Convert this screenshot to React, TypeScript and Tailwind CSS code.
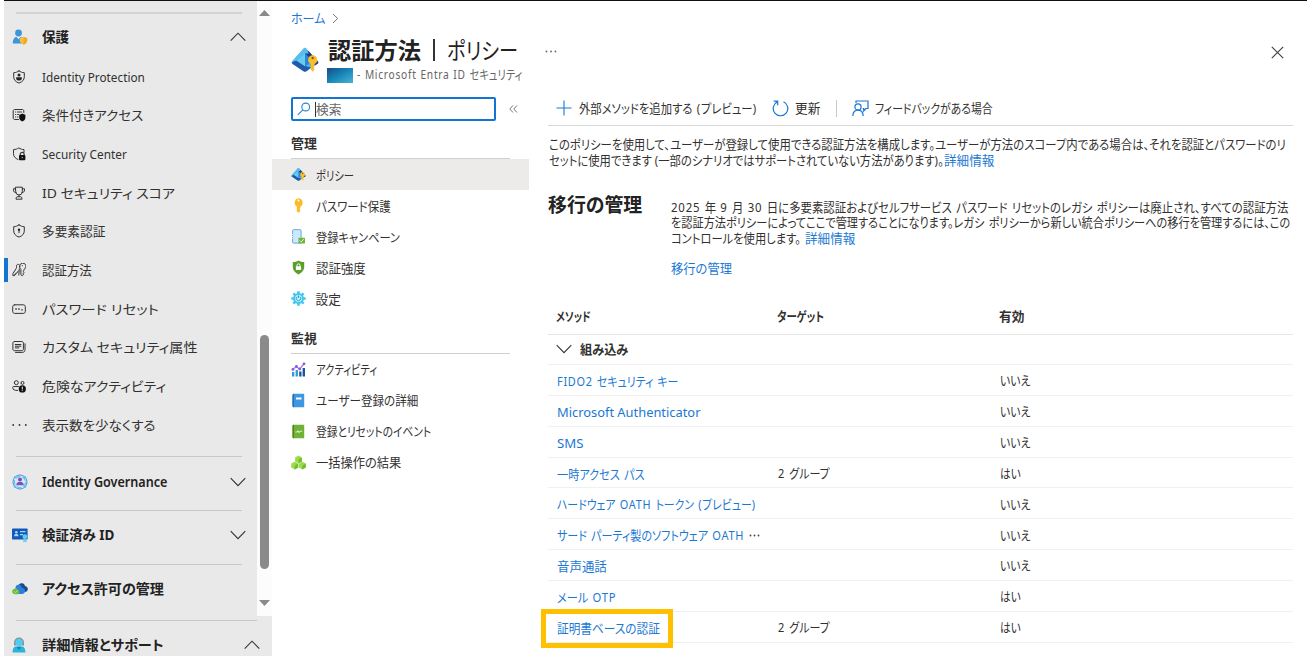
import { useLayoutEffect, useRef, useState } from 'react';
import type { ReactNode } from 'react';

/* Condenses or widens a single line of text so that it fills the given width. */
function Fit({ w, c = '', children, wide = true }: { w: number; c?: string; children: string; wide?: boolean }) {
  const ref = useRef<HTMLSpanElement>(null);
  const [scale, setScale] = useState(1);
  useLayoutEffect(() => {
    if (ref.current) setScale(w / ref.current.offsetWidth);
  }, [w]);
  const mixed = wide && /[^\x00-\x7f]/.test(children);
  /* Latin runs inside Japanese text are set a little looser. */
  const body: ReactNode = mixed
    ? children.split(/([\x21-\x7e]+)/).map((part, i) =>
        i % 2 ? <span key={i} className="tracking-[0.07em]">{part}</span> : part,
      )
    : children;
  return (
    <span className={`block shrink-0 whitespace-nowrap ${c}`} style={{ width: w }}>
      <span ref={ref} className={`inline-block origin-left ${mixed ? '[word-spacing:1.500px]' : ''}`} style={{ transform: `scaleX(${scale})` }}>
        {body}
      </span>
    </span>
  );
}

function Chevron({ up = false, c = '' }: { up?: boolean; c?: string }) {
  return (
    <svg className={`shrink-0 ${c}`} width="16" height="10" viewBox="0 0 16 10" fill="none" stroke="#333" strokeWidth="1.1">
      <path d={up ? 'M.7 8.6 8 1.2l7.3 7.4' : 'M.7 1.2 8 8.6l7.3-7.4'} />
    </svg>
  );
}

function Line({ d, children }: { d?: string; children?: ReactNode }) {
  return (
    <svg width="14" height="14" viewBox="0 0 14 14" fill="none" stroke="#333" strokeWidth="1" strokeLinejoin="round" strokeLinecap="round">
      {d && <path d={d} />}
      {children}
    </svg>
  );
}

const SHIELD = 'M7 .9C8.6 2 10.2 2.6 12.3 2.7v4.2c0 3-2 5-5.3 6.2C3.700 11.900 1.700 9.900 1.700 6.900V2.700C3.800 2.600 5.400 2 7 .9Z';

const navIcons = {
  identity: (
    <Line d={SHIELD}>
      <circle cx="7" cy="4.900" r="1.500" fill="#222" stroke="none" />
      <path d="M4.200 7.200h5.600v1.400C9.800 10 8.600 10.600 7 10.600S4.200 10 4.200 8.600Z" fill="#222" stroke="none" />
    </Line>
  ),
  conditional: (
    <Line d="M6.500 11.500H2.700c-.9 0-1.500-.6-1.500-1.500V3c0-.9.600-1.500 1.500-1.500h7.600c.9 0 1.500.6 1.500 1.500v1.500M3.500 4h.3M5.500 4h4M3.500 6.500h.3M5.500 6.500h1M3.500 9h.3M5.500 9h.5">
      <path d="M10.300 5.600c.9.700 1.900 1 3.100 1.100v2.700c0 1.900-1.200 3.200-3.100 4-1.900-.8-3.100-2.100-3.100-4V6.700c1.200-.1 2.200-.4 3.100-1.100Z" fill="#111" stroke="none" />
    </Line>
  ),
  center: (
    <Line d="M6 12.500C3.200 11.300 1.500 9.500 1.500 6.700V2.600C3.500 2.500 5.200 2 6.800.9 8.500 2 10 2.500 12 2.600v2.600">
      <path d="M8.300 8.300V7.200a1.900 1.900 0 0 1 3.800 0v1.100" strokeWidth="1.200" />
      <rect x="7" y="8" width="6.400" height="5.300" rx="1" fill="#111" stroke="none" />
      <circle cx="10.200" cy="10.600" r=".6" fill="#eee" stroke="none" />
    </Line>
  ),
  score: <Line d="M3.700 1.200h6.600v4.500a3.300 3.300 0 0 1-6.600 0ZM3.700 2.800H1.500v1.400c0 1.500 1 2.300 2.300 2.300M10.300 2.800h2.200v1.400c0 1.500-1 2.300-2.300 2.300M7 9v1.700M4 12.800c0-1.400.6-2.100 1.800-2.100h2.400c1.200 0 1.800.7 1.800 2.100Z" />,
  mfa: (
    <Line d={SHIELD}>
      <circle cx="7" cy="5.800" r="1.200" fill="#222" stroke="none" />
      <path d="M7 6v2.800" />
    </Line>
  ),
  methods: <Line d="M7.600 3.400A3.200 3.200 0 1 1 12 6.300v1.200l-.9.900.9.900-.9 1 .7.800-1.700 1.700-1.200-1.100V6.500A3.400 3.400 0 0 1 7.600 3.400ZM10.300 2.700h.1M7.200 1.800C5.600.5 4.200 1.800 4.500 3.700c.1.700 0 1.300-.3 1.800L.9 10.600v2h1.700v-1.200h1.200v-1.300h1L6.300 8M7.300 6l-.5 6" />,
  reset: <Line d="M2.700 2.800h8.600c1.200 0 2 .8 2 2v4.600c0 1.200-.8 2-2 2H2.700c-1.200 0-2-.8-2-2V4.800c0-1.200.8-2 2-2Z"><path d="M3.300 7h1.500M6.200 7h1.500M9.300 7.900h1.500" strokeWidth="1.400" strokeLinecap="butt" /></Line>,
  custom: <Line d="M2.500 1.500h7.300c1 0 1.600.6 1.600 1.600v6c0 1-.6 1.600-1.600 1.600H2.500C1.500 10.700.9 10.100.9 9.100v-6c0-1 .6-1.600 1.600-1.600ZM3.300 4.500h5.600M3.300 6.200h5.600M3.300 7.900h3.500M13 3.700v6c0 1.700-1 2.700-2.700 2.700H3.500" />,
  risky: (
    <Line d="M2.300 3.700a2 2 0 1 0 4 0a2 2 0 1 0-4 0M9 3.900a1.500 1.500 0 1 0 3 0a1.500 1.500 0 1 0-3 0M6.500 7.500H1.700c-1 0-1 .6-1 1.200C.7 10.500 2.300 11.500 5.500 11.500">
      <circle cx="10.300" cy="9.900" r="3.600" fill="#111" stroke="none" />
      <path d="M10.300 8v2.100M10.300 11.600v.1" stroke="#eee" />
    </Line>
  ),
  more: <svg width="15" height="14" viewBox="0 0 15 14" fill="#333"><circle cx="1.200" cy="7" r=".9" /><circle cx="7.500" cy="7" r=".9" /><circle cx="13.800" cy="7" r=".9" /></svg>,
};

const nav: { icon: keyof typeof navIcons; label: string; w: number; active?: boolean }[] = [
  { icon: 'identity', label: 'Identity Protection', w: 103 },
  { icon: 'conditional', label: '条件付きアクセス', w: 101 },
  { icon: 'center', label: 'Security Center', w: 85 },
  { icon: 'score', label: 'ID セキュリティ スコア', w: 133 },
  { icon: 'mfa', label: '多要素認証', w: 63 },
  { icon: 'methods', label: '認証方法', w: 50, active: true },
  { icon: 'reset', label: 'パスワード リセット', w: 117 },
  { icon: 'custom', label: 'カスタム セキュリティ属性', w: 155 },
  { icon: 'risky', label: '危険なアクティビティ', w: 124 },
  { icon: 'more', label: '表示数を少なくする', w: 113 },
];

function Section({ icon, label, w, c, chevron, weight = 'font-bold' }: { icon: ReactNode; label: string; w: number; c: string; chevron?: 'up' | 'down'; weight?: string }) {
  return (
    <div className={`flex shrink-0 items-center ${c}`}>
      <span className="flex w-[38px] shrink-0 items-center pl-[8px]">{icon}</span>
      <Fit w={w} wide={false} c={`text-[13.500px] text-[#222] ${weight}`}>{label}</Fit>
      {chevron && <Chevron up={chevron === 'up'} c="ml-auto" />}
    </div>
  );
}

const userShield = (
  <svg width="16" height="16" viewBox="0 0 16 16">
    <circle cx="6.500" cy="4" r="3.400" fill="#3b97dd" />
    <path d="M.8 14.500C.8 10.500 2.300 8 4.500 8l2 2.200L8.500 8c2 0 3.500 2.500 3.700 6.500Z" fill="#3b97dd" />
    <path d="M11.500 7.800c1 .8 2 1.100 3.700 1.200v2.600c0 2-1.500 3.300-3.700 4.200-2.200-.9-3.700-2.200-3.700-4.200V9c1.700-.1 2.700-.4 3.700-1.200Z" fill="#f9c13a" />
    <path d="M11.500 7.800c1 .8 2 1.100 3.700 1.200v2.600c0 2-1.500 3.300-3.700 4.200Z" fill="#f0a92b" />
  </svg>
);
const governance = (
  <svg width="16" height="16" viewBox="0 0 16 16" fill="none">
    <circle cx="8" cy="8" r="7" stroke="#4a8ee0" strokeWidth="1" />
    <circle cx="8" cy="8" r="5.600" fill="#d9e8f7" stroke="#5ec5e8" strokeWidth="1.200" strokeDasharray="5 2" />
    <circle cx="8" cy="5.500" r="2" fill="#7a4ecb" />
    <path d="M4.200 11.300C4.600 8.500 5.800 7.700 8 7.700s3.400.8 3.800 3.600Z" fill="#7a4ecb" />
    <circle cx="2.800" cy="3.300" r="1.100" fill="#4cc3ec" /><circle cx="13.200" cy="3.300" r="1.100" fill="#4cc3ec" />
    <circle cx="2.800" cy="12.700" r="1.100" fill="#4cc3ec" /><circle cx="13.200" cy="12.700" r="1.100" fill="#4cc3ec" />
  </svg>
);
const verified = (
  <svg width="16" height="16" viewBox="0 0 16 16">
    <rect x="0" y="1.500" width="15.600" height="11" rx=".7" fill="#1459b8" />
    <circle cx="4.300" cy="5.200" r="1.300" fill="#9ddcff" />
    <path d="M2 9.200c.2-1.700.9-2.300 2.300-2.300s2.100.6 2.300 2.300ZM8 4h5.500v1.300H8ZM8 7h3v1.200H8Z" fill="#9ddcff" />
    <circle cx="12.900" cy="9.700" r="2.400" fill="#60ccef" />
    <path d="m11.600 11.500-.4 4 1.700-1 1.700 1-.4-4Z" fill="#60ccef" />
  </svg>
);
const cloud = (
  <svg width="16" height="13" viewBox="0 0 16 13">
    <path d="M6 8C5 3.500 7.500 1 10 1.200c2 .1 2.700 1.500 3 2.700 1.700.3 2.800 1.600 2.800 3.200 0 1.700-1.300 3-3 3H7Z" fill="#1c4b8c" />
    <path d="M3.500 7C3 4 5 2.500 7 2.800c1.700.2 2.700 1.400 2.900 3 2 .2 3.200 1.600 3.200 3.100 0 1.800-1.400 3-3.100 3H4Z" fill="#2b7fdf" />
    <path d="M3.300 12.200C1.400 12.200.2 11 .2 9.500c0-1.400 1-2.500 2.400-2.700C3.300 5.900 5.700 6 6 8.200c1 .3 1.400 1.100 1.400 2 0 1.200-.8 2-2 2Z" fill="#6fbe3a" />
    <path d="m2.300 9.500 1.200 1.200L5.700 8.300" fill="none" stroke="#c8eab0" strokeWidth=".8" />
  </svg>
);
const support = (
  <svg width="14" height="18" viewBox="0 0 14 18">
    <path d="M2 6.500a5 5 0 0 1 10 0v3H9.500V5h-5v4.500H2Z" fill="#8b9095" />
    <circle cx="7" cy="6.400" r="3.700" fill="#50cdf0" />
    <path d="M.6 16.500C.6 12.300 2 10.500 4.300 10.500L7 12.800l2.700-2.300c2.300 0 3.700 1.800 3.700 6Z" fill="#28b4dc" />
    <path d="M4.300 10.500 7 14l2.700-3.500Z" fill="#0c88ad" />
  </svg>
);

function Diamond({ s }: { s: number }) {
  return (
    <svg width={s} height={s} viewBox="0 0 28 28" className="shrink-0">
      <path d="M15.200 2.500c-.8-.9-1.800-.9-2.600 0L1.200 15.200c-.9 1-.8 1.900.2 2.600l11.100 7.500c.9.600 2 .6 2.900 0l11.100-7.500c1-.7 1.100-1.600.2-2.600Z" fill="#4cb4ea" />
      <path d="M14 7.500 17.500 5l9.200 10.200c.9 1 .8 1.900-.2 2.600l-3 2L14 9Z" fill="#1a3f7c" />
      <path d="m.9 16.800 4-2.700L14 20l6 1.500-4.600 3.800c-.9.600-2 .6-2.900 0L1.400 17.800Z" fill="#215aa8" />
      <path d="M14 7.500v12.700l-8.400-5.500Z" fill="#67cbf3" />
      <path d="m14 7.500 8.400 7.200-8.400 5.500Z" fill="#2c86d8" />
      <path d="M12.600 2.500 1.200 15.200l4.400-.5L14 7.500h3.800l-2.600-5c-.8-.9-1.800-.9-2.600 0Z" fill="#5abdf0" />
      <path d="M21.700 9.300a4.600 4.600 0 0 1 2 8.700v1.500l-1 1 1 1-1 1 .9 1-2 2.200-1.900-2.200V18a4.600 4.600 0 0 1 2-8.700Z" fill="#fcbc2c" />
      <circle cx="21.700" cy="12" r="1.200" fill="#7d5a20" />
    </svg>
  );
}

const menuIcons = {
  policy: <Diamond s={15} />,
  key: <svg width="15" height="15" viewBox="0 0 15 15"><path d="M7.500.3a4.500 4.500 0 0 1 2 8.300v1.200l-.9.900.9.900-.9.900.8.800-1.900 1.500-1.700-1.500V8.600A4.500 4.500 0 0 1 7.500.3Z" fill="#fdbb27" /><circle cx="7.500" cy="2.600" r="1" fill="#fff" /></svg>,
  campaign: <svg width="15" height="15" viewBox="0 0 15 15"><rect x="1.600" y=".7" width="8.500" height="13.400" rx="1" fill="#cfe9fc" stroke="#65a8e8" /><path d="M1.600 5v5" stroke="#cfe9fc" strokeDasharray="1 1" /><rect x="7.500" y="8.800" width="6.500" height="5.700" rx=".6" fill="#70b83a" /><path d="m9 11.500 1.300 1.300 2.300-2.500" fill="none" stroke="#fff" /></svg>,
  strength: <svg width="15" height="15" viewBox="0 0 15 15"><path d="M7.500.4c1.700 1.300 3.500 1.700 5.700 1.700v4.700c0 3.700-2.500 6-5.700 7.700C4.300 12.800 1.800 10.500 1.800 6.800V2.100C4 2.100 5.800 1.700 7.500.4Z" fill="#5b9f29" /><path d="M6 6.500V5.300a1.500 1.500 0 0 1 3 0v1.200" fill="none" stroke="#fff" /><rect x="4.900" y="6.200" width="5.200" height="3.900" rx=".5" fill="#fff" /></svg>,
  settings: (
    <svg width="15" height="15" viewBox="0 0 15 15" fill="none">
      <path d="M7.500.3v14.400M.3 7.500h14.400M2.400 2.400l10.200 10.200M12.600 2.400 2.400 12.600" stroke="#42c6ee" strokeWidth="2.600" />
      <circle cx="7.500" cy="7.500" r="5.400" fill="#42c6ee" />
      <circle cx="7.500" cy="7.500" r="3.400" fill="#c9f0fb" />
      <path d="M6.200 5.700a2.200 2.200 0 1 0 2.600 0M7.500 4.500V7" stroke="#2a9fdb" strokeWidth="1" />
    </svg>
  ),
  activity: <svg width="15" height="15" viewBox="0 0 15 15"><path d="M1 10h2.300v4.500H1ZM4.600 8h2.300v6.500H4.600Z" fill="#2a9cdb" /><path d="M8.200 9.500h2.300v5H8.200ZM11.600 6H14v8.500h-2.400Z" fill="#1d5397" /><path d="m1.800 7.500 3.500-3 3.200 2.700L12.900 2" fill="none" stroke="#a578e6" strokeWidth="1.200" /><g fill="#8a55e0"><circle cx="1.900" cy="7.400" r="1.400" /><circle cx="5.400" cy="4.500" r="1.400" /><circle cx="8.700" cy="7" r="1.400" /><circle cx="13" cy="1.800" r="1.400" /></g></svg>,
  book: <svg width="15" height="15" viewBox="0 0 15 15"><path d="M1.500 2.200c0-1 .5-1.500 1.500-1.500h10.200v13.600H3c-1 0-1.500-.5-1.500-1.500Z" fill="#3f97e2" /><path d="M1.500 2.200c0-1 .5-1.500 1.500-1.500v13.600c-1 0-1.500-.5-1.500-1.500Z" fill="#1f6fbd" /><rect x="5" y="4.500" width="5.500" height="2" rx=".3" fill="#fff" /></svg>,
  log: <svg width="15" height="15" viewBox="0 0 15 15"><path d="M1.500 2.200c0-1 .5-1.500 1.500-1.500h10.200v13.600H3c-1 0-1.500-.5-1.500-1.500Z" fill="#71b137" /><path d="M1.500 2.200c0-1 .5-1.500 1.500-1.500v13.600c-1 0-1.500-.5-1.500-1.500Z" fill="#4c8522" /><path d="M4.500 8h1.700l.8-1.300 1 2.100.9-1.600h2.300" fill="none" stroke="#e9f7dc" strokeWidth=".9" /></svg>,
  bulk: (
    <svg width="15" height="15" viewBox="0 0 15 15">
      <g fill="#9ddc48"><path d="m7.500.6 3.400 1.800v4L7.500 8.200 4.100 6.400v-4Z" /><path d="m3.700 6.800 3.500 1.800v4l-3.500 1.900-3.500-1.900v-4Z" /><path d="m11.300 6.800 3.500 1.800v4l-3.500 1.900-3.500-1.900v-4Z" /></g>
      <g fill="#74ba33"><path d="M10.900 2.400 7.500 4.300v3.900l3.400-1.800Z" /><path d="m7.200 8.600-3.500 1.900v4l3.500-1.900Z" /><path d="m14.800 8.600-3.500 1.900v4l3.500-1.900Z" /></g>
    </svg>
  ),
};

type MenuEntry = { icon: keyof typeof menuIcons; label: string; w: number; active?: boolean };
const manage: MenuEntry[] = [
  { icon: 'policy', label: 'ポリシー', w: 38, active: true },
  { icon: 'key', label: 'パスワード保護', w: 75 },
  { icon: 'campaign', label: '登録キャンペーン', w: 84 },
  { icon: 'strength', label: '認証強度', w: 50 },
  { icon: 'settings', label: '設定', w: 25 },
];
const monitor: MenuEntry[] = [
  { icon: 'activity', label: 'アクティビティ', w: 61 },
  { icon: 'book', label: 'ユーザー登録の詳細', w: 102 },
  { icon: 'log', label: '登録とリセットのイベント', w: 115 },
  { icon: 'bulk', label: '一括操作の結果', w: 85 },
];

function Menu({ items }: { items: MenuEntry[] }) {
  return (
    <>
      {items.map((m) => (
        <div key={m.label} className={`flex h-[31px] items-center pl-[19px] ${m.active ? 'bg-[#edebe9]' : ''}`}>
          <span className="w-[24.500px]">{menuIcons[m.icon]}</span>
          <Fit w={m.w}>{m.label}</Fit>
        </div>
      ))}
    </>
  );
}

const methods: { name: string; w: number; target?: string; on: boolean; more?: boolean; marked?: boolean }[] = [
  { name: 'FIDO2 セキュリティ キー', w: 121, on: false },
  { name: 'Microsoft Authenticator', w: 143, on: false },
  { name: 'SMS', w: 26, on: false },
  { name: '一時アクセス パス', w: 88, target: '2 グループ', on: true },
  { name: 'ハードウェア OATH トークン (プレビュー)', w: 199, on: false },
  { name: 'サード パーティ製のソフトウェア OATH', w: 187, on: false, more: true },
  { name: '音声通話', w: 50, on: false },
  { name: 'メール OTP', w: 59, on: true },
  { name: '証明書ベースの認証', w: 103, target: '2 グループ', on: true, marked: true },
];

export default function App() {
  return (
    <div
      lang="ja"
      className="flex h-[656px] w-[1307px] overflow-hidden bg-white pl-[4px] font-['Noto_Sans','Noto_Sans_CJK_JP',sans-serif] text-[12.700px] leading-[16px] text-[#323130] [font-feature-settings:'palt']"
    >
      <aside className="flex w-[268px] shrink-0 flex-col border-t border-[#111] bg-[#e9e9e9]">
        <div className="flex h-[615px] shrink-0">
          <nav className="w-[253px] pt-[11px]">
            <div className="ml-[12px] h-[2px] w-[226px] bg-[#d3d3d3]" />
            <Section icon={userShield} label="保護" w={27} c="h-[45px] w-[242px]" chevron="up" />
            <div className="mt-[-1.700px]">
              {nav.map((n) => (
                <div key={n.label} className="flex h-[38.700px] items-center">
                  <span className={`h-[24px] w-[4px] ${n.active ? 'bg-[#1474d4]' : ''}`} />
                  <span className="w-[34px] pl-[4px]">{navIcons[n.icon]}</span>
                  <Fit w={n.w} wide={false}>{n.label}</Fit>
                </div>
              ))}
            </div>
            <div className="ml-[12px] mt-[11.500px] h-px w-[226px] bg-[#c8c8c8]" />
            <Section icon={governance} label="Identity Governance" w={125} c="h-[53px] w-[242px] pb-[3px]" chevron="down" weight="font-semibold" />
            <div className="ml-[12px] h-px w-[226px] bg-[#c8c8c8]" />
            <Section icon={verified} label="検証済み ID" w={72} c="h-[53px] w-[242px] pb-[5px]" chevron="down" />
            <div className="ml-[12px] h-px w-[226px] bg-[#c8c8c8]" />
            <Section icon={cloud} label="アクセス許可の管理" w={122} c="h-[48px] w-[242px]" />
          </nav>
          <div className="flex w-[15px] flex-col items-center bg-[#fcfcfc] pt-[9px]">
            <svg width="11" height="6" viewBox="0 0 11 6"><path d="M5.500 0 11 6H0Z" fill="#8a8a8a" /></svg>
            <div className="mt-[319px] h-[234px] w-[9px] rounded-full bg-[#8a8a8a]" />
            <svg className="mt-[31px]" width="11" height="6" viewBox="0 0 11 6"><path d="M0 0h11L5.500 6Z" fill="#8a8a8a" /></svg>
          </div>
        </div>
        <div className="ml-[12px] mt-[4px] h-px w-[241px] shrink-0 bg-[#c8c8c8]" />
        <Section icon={support} label="詳細情報とサポート" w={122} c="h-[48px] w-[256px]" chevron="up" />
      </aside>

      <main className="flex min-w-0 flex-1 flex-col border-t border-[#111]">
        <header className="h-[92px] pl-[19px]">
          <div className="flex h-[34px] items-center gap-[7px]">
            <Fit w={34} c="text-[#1a78d2]">ホーム</Fit>
            <svg width="7" height="11" viewBox="0 0 7 11" fill="none" stroke="#777"><path d="m1 1 4.700 4.500L1 10" /></svg>
          </div>
          <div className="flex">
            <div className="w-[36px] pt-[11px]"><Diamond s={28} /></div>
            <div>
              <div className="flex h-[30px] items-center text-[23px] leading-[30px] text-[#222]">
                <Fit w={93} c="ml-[1px] font-bold">認証方法</Fit>
                <span className="ml-[12px] h-[22px] w-[1.500px] bg-[#333]" />
                <Fit w={71} c="ml-[12px]">ポリシー</Fit>
                <svg className="ml-[27px] mt-[3px]" width="12" height="3" fill="#666"><circle cx="1.500" cy="1.500" r=".9" /><circle cx="6" cy="1.500" r=".9" /><circle cx="10.500" cy="1.500" r=".9" /></svg>
              </div>
              <div className="flex h-[18px] items-center">
                <span className="mt-[2px] h-[15px] w-[26px] bg-linear-to-br from-[#164d83] via-[#1787b9] to-[#48b4d3]" />
                <Fit w={165} c="ml-[4px] text-[#666]">- Microsoft Entra ID セキュリティ</Fit>
              </div>
            </div>
            <svg className="ml-auto mr-[23px] mt-[11px]" width="13" height="13" viewBox="0 0 13 13" stroke="#444" strokeWidth="1.200"><path d="m.8.8 11.400 11.400M12.200.8.8 12.200" /></svg>
          </div>
        </header>

        <div className="flex flex-1">
          <section className="w-[257px] shrink-0 pt-[4px]">
            <div className="flex h-[24px] items-center pl-[19px]">
              <div className="flex h-[24px] w-[205px] items-center rounded-[2px] border-2 border-[#1474d4] pl-[4px]">
                <svg width="14" height="14" viewBox="0 0 14 14" fill="none" stroke="#2b82d4" strokeWidth="1.100"><circle cx="8.700" cy="5" r="3.900" /><path d="M5.900 7.800.8 12.900" /></svg>
                <span className="ml-[4px] h-[15px] w-px bg-[#333]" />
                <Fit w={25} c="mt-[-1px] text-[#666]">検索</Fit>
              </div>
              <svg className="ml-[13px]" width="9" height="8" viewBox="0 0 9 8" fill="none" stroke="#777"><path d="M4 .5.800 4 4 7.500M8 .5 4.800 4 8 7.500" /></svg>
            </div>
            <div className="flex h-[37.400px] items-center pl-[19px] pt-[7px]"><Fit w={25.500} c="font-bold">管理</Fit></div>
            <div className="ml-[19px] h-px w-[219px] bg-[#d0d0d0]" />
            <Menu items={manage} />
            <div className="flex h-[38.600px] items-center pl-[19px] pt-[8.500px]"><Fit w={25.500} c="font-bold">監視</Fit></div>
            <div className="ml-[19px] h-px w-[219px] bg-[#d0d0d0]" />
            <Menu items={monitor} />
          </section>

          <section className="ml-[19px] w-[745px]">
            <div className="flex h-[33px] items-center border-b border-[#d8d8d8] pb-[2px] pl-[8px]">
              <svg width="16" height="16" viewBox="0 0 16 16" stroke="#1a78d2" strokeWidth="1.100"><path d="M8 .5v15M.5 8h15" /></svg>
              <Fit w={178} c="ml-[7px]">外部メソッドを追加する (プレビュー)</Fit>
              <svg className="ml-[15px]" width="17" height="17" viewBox="0 0 17 17" fill="none" stroke="#1a78d2" strokeWidth="1.200"><path d="M11.500 1.800a7.300 7.300 0 1 1-6.200.1M1.700 1.200h4v4" /></svg>
              <Fit w={25} c="ml-[6px]">更新</Fit>
              <span className="ml-[16px] h-[17px] w-px bg-[#c8c8c8]" />
              <svg className="ml-[15px]" width="17" height="17" viewBox="0 0 17 17" fill="none" stroke="#1a78d2" strokeWidth="1.200"><path d="M4 3V1h12v7.500h-2l-2.300 2.400V8.500h-1" /><circle cx="6" cy="7" r="3.100" /><path d="M.8 16c.2-3.500 2.200-5.800 5.200-5.800s5 2.300 5.200 5.800" /></svg>
              <Fit w={118} c="ml-[6px]">フィードバックがある場合</Fit>
            </div>
            <div className="pl-[0.500px] pt-[11px] leading-[15.500px]">
              <Fit w={737}>このポリシーを使用して、ユーザーが登録して使用できる認証方法を構成します。ユーザーが方法のスコープ内である場合は、それを認証とパスワードのリ</Fit>
              <div className="flex">
                <Fit w={395} wide={false}>セットに使用できます (一部のシナリオではサポートされていない方法があります)。</Fit>
                <Fit w={50.500} c="text-[#1a78d2]">詳細情報</Fit>
              </div>
            </div>
            <div className="flex pt-[31.500px]">
              <Fit w={94} c="mr-[29px] mt-[-7px] text-[19.500px] font-bold leading-[24px] text-[#222]">移行の管理</Fit>
              <div className="leading-[15.500px]">
                <Fit w={617}>2025 年 9 月 30 日に多要素認証およびセルフサービス パスワード リセットのレガシ ポリシーは廃止され、すべての認証方法</Fit>
                <Fit w={619}>を認証方法ポリシーによってここで管理することになります。レガシ ポリシーから新しい統合ポリシーへの移行を管理するには、この</Fit>
                <div className="flex">
                  <Fit w={130} c="mr-[4px]">コントロールを使用します。</Fit>
                  <Fit w={50.500} c="text-[#1a78d2]">詳細情報</Fit>
                </div>
                <Fit w={61} c="mt-[15px] text-[#1a78d2]">移行の管理</Fit>
              </div>
            </div>
            <div className="mt-[21.400px]">
              <div className="grid h-[37px] grid-cols-[221px_222px_1fr] items-center border-b border-[#e6e6e6] pl-[8px] font-bold">
                <Fit w={35}>メソッド</Fit>
                <Fit w={47}>ターゲット</Fit>
                <Fit w={25}>有効</Fit>
              </div>
              <div className="flex h-[30px] items-center border-b border-[#f0f0f0] pl-[8px] font-bold">
                <Chevron />
                <Fit w={48} c="ml-[8px]">組み込み</Fit>
              </div>
              {methods.map((m) => (
                <div key={m.name} className="relative grid h-[30.900px] grid-cols-[221px_221.500px_1fr] items-center border-b border-[#f0f0f0] pl-[9px] pt-[0.500px]">
                  <div className="flex items-center gap-[5px] pt-[1.500px]">
                    <Fit w={m.w} c="text-[#1a78d2]">{m.name}</Fit>
                    {m.more && <svg width="11" height="3" fill="#444"><circle cx="1.500" cy="1.500" r=".9" /><circle cx="5.500" cy="1.500" r=".9" /><circle cx="9.500" cy="1.500" r=".9" /></svg>}
                  </div>
                  <div>{m.target && <Fit w={52}>{m.target}</Fit>}</div>
                  <Fit w={m.on ? 21 : 30}>{m.on ? 'はい' : 'いいえ'}</Fit>
                  {m.marked && <span className="absolute left-[-7px] top-[-3px] h-[39px] w-[132px] border-[5px] border-[#ffc000]" />}
                </div>
              ))}
            </div>
          </section>
        </div>
      </main>
    </div>
  );
}
